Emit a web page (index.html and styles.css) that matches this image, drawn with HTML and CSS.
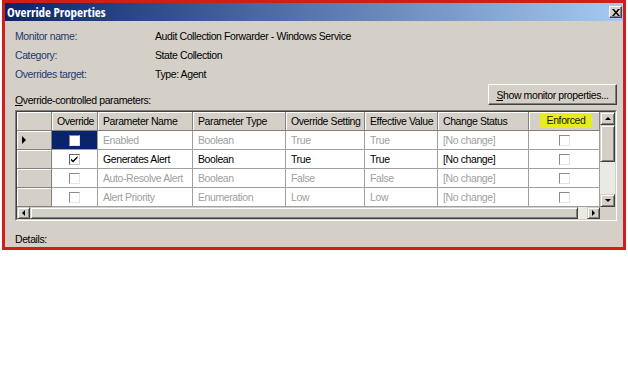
FILE: index.html
```html
<!DOCTYPE html>
<html>
<head>
  <title>Override Properties</title>
  <link rel="stylesheet" href="styles.css">
</head>
<body>
  <div class="dialog">
    <div class="titlebar">
      <span class="title">Override Properties</span>
      <button class="close">
        <svg width="8" height="7" viewBox="0 0 8 7"><path d="M0 0h2l2 2.4 2-2.4h2l-3 3.5 3 3.5h-2l-2-2.4-2 2.4h-2l3-3.5z" fill="#000"/></svg>
      </button>
    </div>
    <div class="content">
      <div class="info">
        <div class="info-row"><span class="label">Monitor name:</span><span>Audit Collection Forwarder - Windows Service</span></div>
        <div class="info-row"><span class="label">Category:</span><span>State Collection</span></div>
        <div class="info-row"><span class="label">Overrides target:</span><span>Type: Agent</span></div>
      </div>
      <div class="params-bar">
        <span class="params-label"><u>O</u>verride-controlled parameters:</span>
        <button class="btn"><u>S</u>how monitor properties...</button>
      </div>
      <div class="grid">
        <div class="grid-inner">
          <div class="grid-main">
            <table class="params">
              <thead>
                <tr>
                  <th class="rowhead"></th>
                  <th class="c-override">Override</th>
                  <th class="c-name">Parameter Name</th>
                  <th class="c-type">Parameter Type</th>
                  <th class="c-setting">Override Setting</th>
                  <th class="c-value">Effective Value</th>
                  <th class="c-status">Change Status</th>
                  <th class="c-enforced"><span class="highlight">Enforced</span></th>
                </tr>
              </thead>
              <tbody>
                <tr class="muted">
                  <td class="rowhead"><span class="pointer"></span></td>
                  <td class="check selected"><span class="box"></span></td>
                  <td>Enabled</td>
                  <td>Boolean</td>
                  <td>True</td>
                  <td>True</td>
                  <td>[No change]</td>
                  <td class="check"><span class="box"></span></td>
                </tr>
                <tr>
                  <td class="rowhead"></td>
                  <td class="check"><span class="box checked"><svg width="9" height="9" viewBox="0 0 9 9"><path d="M1 3.5l2 2 4.5-4.5v2l-4.5 4.5-2-2z" fill="#000"/></svg></span></td>
                  <td>Generates Alert</td>
                  <td>Boolean</td>
                  <td>True</td>
                  <td>True</td>
                  <td>[No change]</td>
                  <td class="check"><span class="box"></span></td>
                </tr>
                <tr class="muted">
                  <td class="rowhead"></td>
                  <td class="check"><span class="box"></span></td>
                  <td>Auto-Resolve Alert</td>
                  <td>Boolean</td>
                  <td>False</td>
                  <td>False</td>
                  <td>[No change]</td>
                  <td class="check"><span class="box"></span></td>
                </tr>
                <tr class="muted">
                  <td class="rowhead"></td>
                  <td class="check"><span class="box"></span></td>
                  <td>Alert Priority</td>
                  <td>Enumeration</td>
                  <td>Low</td>
                  <td>Low</td>
                  <td>[No change]</td>
                  <td class="check"><span class="box"></span></td>
                </tr>
              </tbody>
            </table>
            <div class="vscroll">
              <div class="sbtn"><span class="arrow up"></span></div>
              <div class="vthumb"></div>
              <div class="vtrack"></div>
              <div class="sbtn"><span class="arrow down"></span></div>
            </div>
          </div>
          <div class="hscroll-row">
            <div class="hscroll">
              <div class="sbtn"><span class="arrow left"></span></div>
              <div class="hthumb"></div>
              <div class="htrack"></div>
              <div class="sbtn"><span class="arrow right"></span></div>
            </div>
            <div class="corner"></div>
          </div>
        </div>
      </div>
      <div class="details">Details:</div>
    </div>
  </div>
</body>
</html>
```

FILE: styles.css
```css
body {
  margin: 0;
  padding: 0;
  background-color: #ffffff;
  font-family: "Liberation Sans", Arial, sans-serif;
  font-size: 10.5px;
  letter-spacing: -0.4px;
  color: #000000;
}

.dialog {
  margin-left: 2px;
  width: 618px;
  height: 244px;
  border: 3px solid #d11d1d;
  background-color: #d4d0c8;
  display: flex;
  flex-direction: column;
}

.titlebar {
  height: 18px;
  display: flex;
  align-items: center;
  justify-content: space-between;
  padding-left: 2px;
  background: linear-gradient(to right, #0a246a, #a6caf0);
}

.title {
  color: #ffffff;
  font-family: "Open Sans", "Liberation Sans", sans-serif;
  font-weight: bold;
  font-stretch: 75%;
  font-size: 13px;
  letter-spacing: 0;
}

.close {
  width: 13px;
  height: 12px;
  margin-right: 1px;
  padding: 0;
  display: flex;
  align-items: center;
  justify-content: center;
  background-color: #d4d0c8;
  border: 1px solid;
  border-color: #ffffff #404040 #404040 #ffffff;
  box-shadow: inset -1px -1px #808080;
}

.content {
  flex: 1;
  padding: 6px 6px 0 10px;
}

.info-row {
  display: flex;
  height: 19px;
  line-height: 19px;
}

.label {
  width: 140px;
  color: #24386e;
}

.params-bar {
  display: flex;
  justify-content: space-between;
  align-items: flex-end;
  height: 21px;
}

.params-label {
  line-height: 14px;
  margin-bottom: -2px;
}

.btn {
  width: 129px;
  height: 21px;
  padding: 0;
  white-space: nowrap;
  font-family: inherit;
  font-size: inherit;
  letter-spacing: inherit;
  color: #000000;
  background-color: #d4d0c8;
  border: 1px solid;
  border-color: #ffffff #404040 #404040 #ffffff;
  box-shadow: inset -1px -1px #808080;
}

.grid {
  margin-top: 5px;
  border: 1px solid;
  border-color: #808080 #ffffff #ffffff #808080;
}

.grid-inner {
  border: 1px solid;
  border-color: #404040 #d4d0c8 #d4d0c8 #404040;
  background-color: #d4d0c8;
}

.grid-main {
  display: flex;
}

.params {
  width: 583px;
  table-layout: fixed;
  border-collapse: separate;
  border-spacing: 0;
}

.params th,
.params td {
  box-sizing: border-box;
  height: 19px;
  padding: 0 0 0 5px;
  border-right: 1px solid #a0a0a0;
  border-bottom: 1px solid #a0a0a0;
  text-align: left;
  white-space: nowrap;
  overflow: hidden;
  background-color: #ffffff;
}

.params th {
  font-weight: normal;
  color: #000000;
  background-color: #d4d0c8;
  border-right-color: #808080;
  border-bottom-color: #808080;
  box-shadow: inset 1px 1px #ffffff;
}

.params td.rowhead {
  background-color: #d4d0c8;
  border-right-color: #808080;
  border-bottom-color: #808080;
  box-shadow: inset 1px 1px #ffffff;
}

.rowhead { width: 35px; }
.c-override { width: 46px; }
.c-name { width: 95px; }
.c-type { width: 93px; }
.c-setting { width: 79px; }
.c-value { width: 73px; }
.c-status { width: 91px; }
.c-enforced { width: 71px; }

.params th.c-enforced {
  text-align: center;
  padding: 0 0 0 4px;
}

.highlight {
  display: inline-block;
  padding: 0 7px;
  line-height: 15px;
  margin-top: -3px;
  color: #1a1a00;
  background-color: #e6ec1e;
}

.muted td {
  color: #a0a0a0;
}

.params td.check {
  text-align: center;
  padding: 0;
}

.params td.selected {
  background-color: #0a246a;
}

.box {
  display: inline-block;
  box-sizing: border-box;
  width: 11px;
  height: 11px;
  vertical-align: middle;
  border: 1px solid;
  border-color: #8a8a8a #e4e4e4 #e4e4e4 #8a8a8a;
  background-color: #ffffff;
}

.box.checked {
  border-color: #606060 #c8c8c8 #c8c8c8 #606060;
}

.box svg {
  display: block;
}

.pointer {
  display: inline-block;
  width: 0;
  height: 0;
  border-top: 4px solid transparent;
  border-bottom: 4px solid transparent;
  border-left: 4px solid #000000;
}

.vscroll {
  width: 15px;
  display: flex;
  flex-direction: column;
}

.sbtn {
  box-sizing: border-box;
  width: 15px;
  height: 13px;
  display: flex;
  align-items: center;
  justify-content: center;
  background-color: #d4d0c8;
  border: 1px solid;
  border-color: #d4d0c8 #404040 #404040 #d4d0c8;
  box-shadow: inset 1px 1px #ffffff, inset -1px -1px #808080;
}

.vthumb {
  box-sizing: border-box;
  height: 37px;
  background-color: #d4d0c8;
  border: 1px solid;
  border-color: #d4d0c8 #404040 #404040 #d4d0c8;
  box-shadow: inset 1px 1px #ffffff, inset -1px -1px #808080;
}

.vtrack {
  flex: 1;
  background-color: #ebe9e4;
}

.arrow {
  width: 0;
  height: 0;
  border: 3px solid transparent;
}

.arrow.up {
  border-top: none;
  border-bottom: 3px solid #000000;
}

.arrow.down {
  border-bottom: none;
  border-top: 3px solid #000000;
}

.arrow.left {
  border-left: none;
  border-right: 3px solid #000000;
}

.arrow.right {
  border-right: none;
  border-left: 3px solid #000000;
}

.hscroll-row {
  display: flex;
  height: 12px;
}

.hscroll {
  width: 583px;
  display: flex;
}

.hscroll .sbtn {
  width: 13px;
  height: 12px;
}

.hthumb {
  box-sizing: border-box;
  width: 548px;
  background-color: #d4d0c8;
  border: 1px solid;
  border-color: #d4d0c8 #404040 #404040 #d4d0c8;
  box-shadow: inset 1px 1px #ffffff, inset -1px -1px #808080;
}

.htrack {
  flex: 1;
  background-color: #ebe9e4;
}

.corner {
  flex: 1;
  background-color: #d4d0c8;
}

.details {
  margin-top: 11px;
  line-height: 14px;
}
```
